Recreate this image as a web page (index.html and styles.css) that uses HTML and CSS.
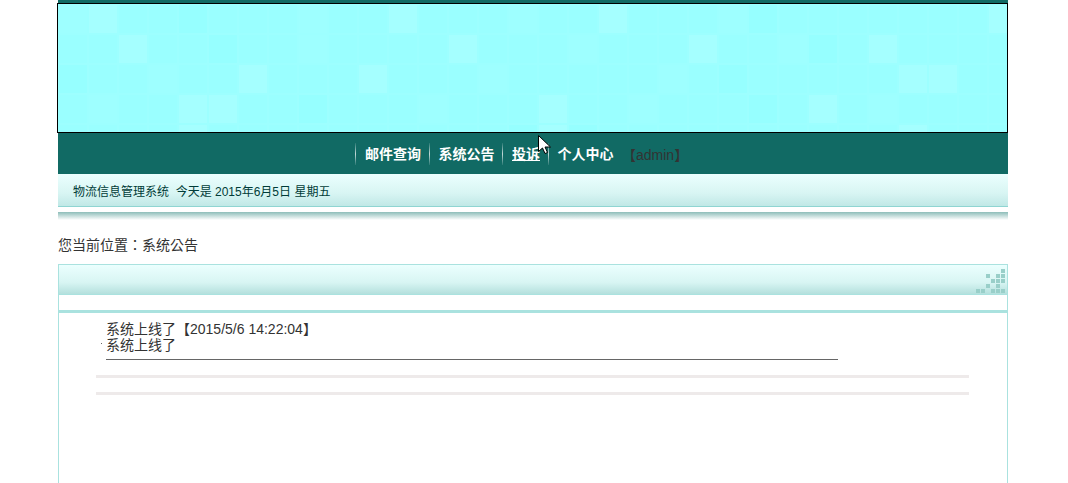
FILE: index.html
```html
<!DOCTYPE html>
<html lang="zh-CN">
<head>
  <meta charset="UTF-8" />
  <title>系统公告</title>
  <link rel="stylesheet" href="styles.css">
</head>
<body>
  <div class="wrap">
    <div class="top-strip"></div>
    <div class="banner">
      <svg width="949" height="128" viewBox="0 0 949 128" xmlns="http://www.w3.org/2000/svg">
        <defs>
          <pattern id="tile" width="30" height="30" patternUnits="userSpaceOnUse">
            <rect width="30" height="30" fill="#9dffff"/>
            <rect x="1" y="1" width="28" height="28" fill="#9affff"/>
          </pattern>
        </defs>
        <rect width="949" height="128" fill="url(#tile)"/>
        <g fill="#a5ffff">
          <rect x="31" y="1" width="28" height="28"/>
          <rect x="331" y="1" width="28" height="28"/>
          <rect x="541" y="1" width="28" height="28"/>
          <rect x="931" y="1" width="18" height="28"/>
          <rect x="61" y="31" width="28" height="28"/>
          <rect x="391" y="31" width="28" height="28"/>
          <rect x="631" y="31" width="28" height="28"/>
          <rect x="811" y="31" width="28" height="28"/>
          <rect x="181" y="61" width="28" height="28"/>
          <rect x="301" y="61" width="28" height="28"/>
          <rect x="841" y="61" width="28" height="28"/>
          <rect x="871" y="61" width="28" height="28"/>
          <rect x="121" y="91" width="28" height="28"/>
          <rect x="151" y="91" width="28" height="28"/>
          <rect x="481" y="91" width="28" height="28"/>
          <rect x="751" y="91" width="28" height="28"/>
          <rect x="121" y="121" width="28" height="7"/>
          <rect x="481" y="121" width="28" height="7"/>
          <rect x="841" y="121" width="28" height="7"/>
        </g>
        <g fill="#9effff">
          <rect x="1" y="1" width="28" height="28"/>
          <rect x="241" y="1" width="28" height="28"/>
          <rect x="451" y="1" width="28" height="28"/>
          <rect x="661" y="1" width="28" height="28"/>
          <rect x="241" y="31" width="28" height="28"/>
          <rect x="511" y="31" width="28" height="28"/>
          <rect x="721" y="31" width="28" height="28"/>
          <rect x="91" y="61" width="28" height="28"/>
          <rect x="421" y="61" width="28" height="28"/>
          <rect x="601" y="61" width="28" height="28"/>
          <rect x="31" y="91" width="28" height="28"/>
          <rect x="361" y="91" width="28" height="28"/>
          <rect x="571" y="91" width="28" height="28"/>
          <rect x="811" y="91" width="28" height="28"/>
        </g>
        <g fill="#96ffff">
          <rect x="121" y="1" width="28" height="28"/>
          <rect x="691" y="1" width="28" height="28"/>
          <rect x="151" y="31" width="28" height="28"/>
          <rect x="751" y="31" width="28" height="28"/>
          <rect x="1" y="61" width="28" height="28"/>
          <rect x="661" y="61" width="28" height="28"/>
          <rect x="241" y="91" width="28" height="28"/>
          <rect x="691" y="91" width="28" height="28"/>
          <rect x="451" y="121" width="28" height="7"/>
          <rect x="511" y="121" width="28" height="7"/>
        </g>
      </svg>
    </div>
    <div class="nav">
      <a class="nav-item">邮件查询</a>
      <a class="nav-item">系统公告</a>
      <a class="nav-item active">投诉</a>
      <a class="nav-item">个人中心</a>
      <span class="nav-user">【admin】</span>
    </div>
    <div class="sub-bar">物流信息管理系统&nbsp;&nbsp;今天是 2015年6月5日 星期五</div>
    <div class="sub-shadow"></div>
    <div class="crumb" lang="zh-Hant">您当前位置：系统公告</div>
    <div class="panel">
      <div class="panel-head">
        <svg class="dots" width="30" height="24" viewBox="0 0 30 24" xmlns="http://www.w3.org/2000/svg" fill="#99cfc9">
          <rect x="25" y="0" width="4" height="4"/>
          <rect x="10" y="5" width="4" height="4"/>
          <rect x="20" y="5" width="4" height="4"/>
          <rect x="25" y="5" width="4" height="4"/>
          <rect x="15" y="10" width="4" height="4"/>
          <rect x="20" y="10" width="4" height="4"/>
          <rect x="25" y="10" width="4" height="4"/>
          <rect x="10" y="15" width="4" height="4"/>
          <rect x="20" y="15" width="4" height="4"/>
          <rect x="0" y="20" width="4" height="4"/>
          <rect x="5" y="20" width="4" height="4"/>
          <rect x="15" y="20" width="4" height="4"/>
          <rect x="20" y="20" width="4" height="4"/>
          <rect x="25" y="20" width="4" height="4"/>
        </svg>
      </div>
      <div class="panel-gap"></div>
      <div class="panel-body">
        <div class="notice">
          <div>系统上线了【2015/5/6 14:22:04】</div>
          <div>系统上线了</div>
        </div>
        <div class="rule"></div>
        <div class="rule"></div>
      </div>
    </div>
  </div>

  <svg class="cursor" width="14" height="20" viewBox="0 0 14 20" xmlns="http://www.w3.org/2000/svg">
    <path d="M0.5 0.5V16.5L4.5 13L7 18.5L9.5 17.5L7 12H12.5Z" fill="#fff" stroke="#000" stroke-width="1"/>
  </svg>
</body>
</html>
```

FILE: styles.css
```css
body {
  margin: 0;
  background: #fff;
  color: #333;
  font-family: "Liberation Sans", "Noto Sans CJK SC", sans-serif;
  font-size: 14px;
  height: 483px;
  overflow: hidden;
}

.wrap {
  width: 950px;
  margin-left: 58px;
}

.top-strip {
  height: 3px;
  background: #116a64;
}

.banner {
  width: 949px;
  height: 128px;
  margin-left: -1px;
  border: 1px solid #000;
}

.banner svg {
  display: block;
}

.nav {
  display: flex;
  align-items: center;
  height: 41px;
  padding-left: 297px;
  background: #116a64;
}

.nav-item {
  padding: 0 7.5px 0 10px;
  line-height: 22px;
  color: #fff;
  font-weight: bold;
  font-size: 14px;
  background: linear-gradient(to bottom, rgba(255,255,255,0.1), rgba(255,255,255,0.75) 50%, rgba(255,255,255,0.1)) no-repeat left center / 1px 22px;
}

.nav-item.active {
  text-decoration: underline;
}

.nav-user {
  margin-left: 1px;
  color: #333;
}

.sub-bar {
  height: 32px;
  line-height: 37px;
  padding-left: 15px;
  font-size: 12px;
  color: #003c38;
  background: linear-gradient(to bottom, #ebfffe, #d8f5f3 60%, #c0e8e6);
  border-bottom: 1px solid #8fd5d2;
}

.sub-shadow {
  height: 8px;
  margin-top: 5px;
  background: linear-gradient(to bottom, #8dbdb9, #fff);
}

.crumb {
  height: 44px;
  line-height: 50px;
  font-family: "Liberation Sans", "Noto Sans CJK TC", sans-serif;
}

.panel {
  height: 218px;
  border: 1px solid #aae2df;
  border-bottom: none;
}

.panel-head {
  display: flex;
  justify-content: flex-end;
  align-items: flex-end;
  height: 28px;
  padding: 0 1px 1px 0;
  background: linear-gradient(to bottom, #ebfffe, #d8f5f3 60%, #b4e0dd);
  border-bottom: 1px solid #aae2df;
}

.dots {
  display: block;
}

.panel-gap {
  height: 15px;
  border-bottom: 3px solid #aae2df;
}

.panel-body {
  padding: 8px 38px 0 37px;
}

.notice {
  position: relative;
  width: 732px;
  margin-left: 10px;
  padding-bottom: 6px;
  line-height: 16px;
  border-bottom: 1px solid #666;
}

.notice::before {
  content: "";
  position: absolute;
  left: -5px;
  top: 22px;
  width: 1px;
  height: 1px;
  background: #666;
}

.rule {
  height: 3px;
  margin-top: 14px;
  background: #eeeaea;
}

.notice + .rule {
  margin-top: 15px;
}

.cursor {
  position: absolute;
  left: 538px;
  top: 135px;
}
```
